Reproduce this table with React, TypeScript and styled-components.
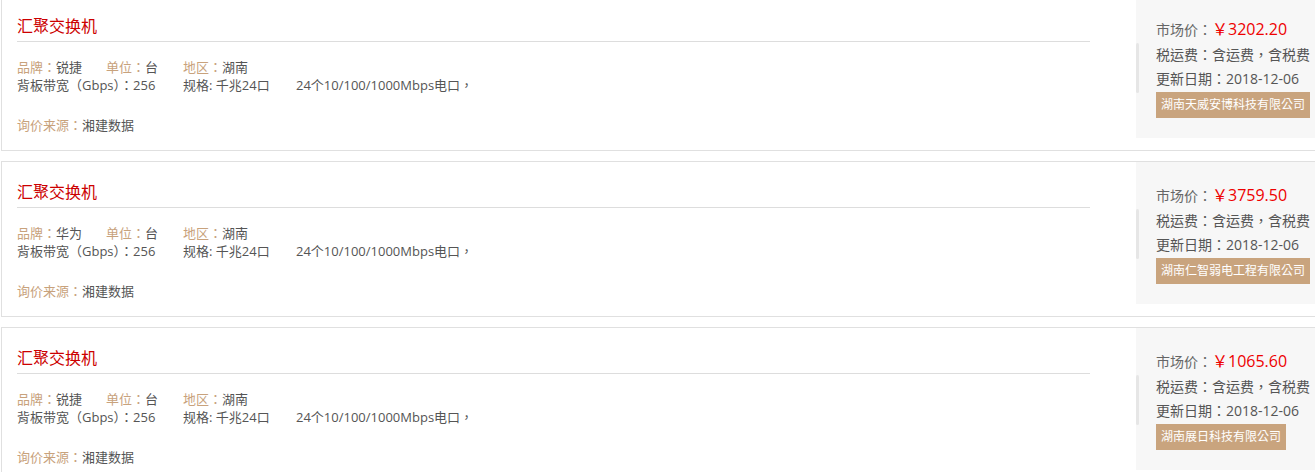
import React from 'react'
import styled, { createGlobalStyle } from 'styled-components'

const GlobalStyle = createGlobalStyle`
  html, body {
    margin: 0;
    padding: 0;
    overflow: hidden;
    background: #fff;
  }
  body {
    font-family: "Open Sans", "Noto Sans CJK TC", "Noto Sans CJK SC", sans-serif;
  }
`

const List = styled.div`
  margin-top: -5px;
  margin-left: 1px;
  width: 1340px;
`

const Card = styled.div`
  display: flex;
  box-sizing: border-box;
  height: 156px;
  border: 1px solid #e0e0e0;
  margin-bottom: 10px;
`

const Main = styled.div`
  width: 1073px;
  padding-left: 15px;
`

const Title = styled.h3`
  margin: 0;
  padding: 20px 0 5px;
  font-size: 16px;
  line-height: 20px;
  font-weight: normal;
  color: #cc0000;
  border-bottom: 1px solid #ddd;
`

const Specs = styled.div`
  margin-top: 16px;
  font-size: 13px;
  line-height: 18px;
  color: #555;
`

const SpecRow = styled.div`
  display: flex;
  white-space: nowrap;
`

const Item = styled.span<{ $w?: number }>`
  display: inline-block;
  min-width: ${p => (p.$w ? `${p.$w}px` : 'auto')};
  margin-right: ${p => (p.$w ? '0' : '24px')};
`

const Label = styled.span`
  color: #c8a27c;
`

const Source = styled.div`
  margin-top: 22px;
  font-size: 13px;
  line-height: 18px;
  color: #555;
`

const Side = styled.div`
  position: relative;
  box-sizing: border-box;
  margin-left: 46px;
  flex: 1;
  height: 142px;
  background: #f7f7f7;
  padding: 20px 0 0 20px;
  font-size: 14px;
  color: #555;
  white-space: nowrap;

  &::before {
    content: '';
    position: absolute;
    left: 0;
    top: 47px;
    width: 3px;
    height: 50px;
    border-radius: 2px;
    background: #e6e6e6;
  }
`

const PriceLine = styled.div`
  line-height: 27px;
  color: #666;
`

const Price = styled.span`
  font-size: 16px;
  color: #e00;
`

const InfoLine = styled.div`
  line-height: 24px;
`

const Company = styled.div`
  display: inline-block;
  margin-top: 1px;
  padding: 0 5px;
  line-height: 26px;
  font-size: 12px;
  color: #fff;
  background: #c9a47e;
`

type Product = {
  brand: string
  price: string
  company: string
}

const products: Product[] = [
  { brand: '锐捷', price: '3202.20', company: '湖南天威安博科技有限公司' },
  { brand: '华为', price: '3759.50', company: '湖南仁智弱电工程有限公司' },
  { brand: '锐捷', price: '1065.60', company: '湖南展日科技有限公司' },
]

const ProductCard: React.FC<{ product: Product }> = ({ product }) => (
  <Card>
    <Main>
      <Title>汇聚交换机</Title>
      <Specs>
        <SpecRow>
          <Item $w={89}>
            <Label>品牌：</Label>
            {product.brand}
          </Item>
          <Item $w={77}>
            <Label>单位：</Label>台
          </Item>
          <Item>
            <Label>地区：</Label>湖南
          </Item>
        </SpecRow>
        <SpecRow>
          <Item $w={166}>背板带宽（Gbps）：256</Item>
          <Item $w={113}>规格: 千兆24口</Item>
          <Item>24个10/100/1000Mbps电口，</Item>
        </SpecRow>
      </Specs>
      <Source>
        <Label>询价来源：</Label>湘建数据
      </Source>
    </Main>
    <Side>
      <PriceLine>
        市场价：<Price>￥{product.price}</Price>
      </PriceLine>
      <InfoLine>税运费：含运费，含税费</InfoLine>
      <InfoLine>更新日期：2018-12-06</InfoLine>
      <Company>{product.company}</Company>
    </Side>
  </Card>
)

export default function App() {
  return (
    <>
      <GlobalStyle />
      <List>
        {products.map((p, i) => (
          <ProductCard key={i} product={p} />
        ))}
      </List>
    </>
  )
}
